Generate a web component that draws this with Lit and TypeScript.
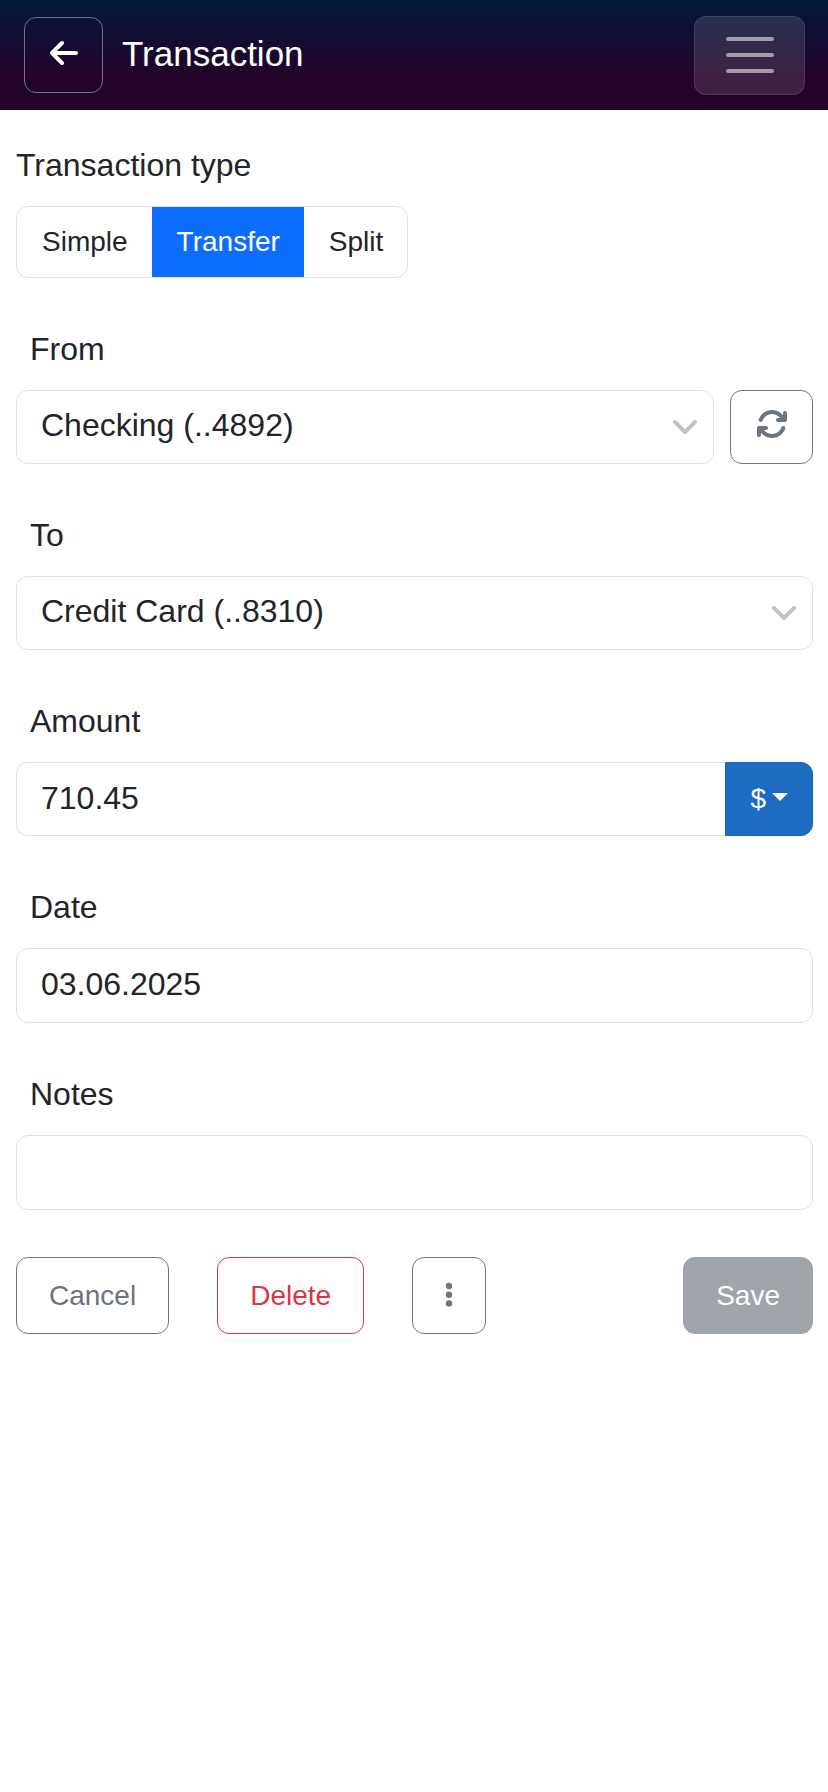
import { LitElement, html, css } from "lit";
import { customElement, state } from "lit/decorators.js";

@customElement("app-root")
export class AppRoot extends LitElement {
  @state() private kind = "Transfer";

  static styles = css`
    :host {
      display: block;
      min-height: 100vh;
      background: #fff;
      color: #212529;
      font: 32px/48px "Liberation Sans", Arial, sans-serif;
    }
    * {
      box-sizing: border-box;
    }
    button,
    input,
    select {
      margin: 0;
      font: inherit;
      color: inherit;
    }
    svg {
      display: block;
    }
    .bar {
      display: flex;
      align-items: center;
      height: 110px;
      padding: 0 23px 0 24px;
      background: linear-gradient(180deg, #02183c 0%, #240328 70%, #240328 100%);
      color: #fff;
    }
    .back {
      display: flex;
      align-items: center;
      justify-content: center;
      width: 79px;
      height: 76px;
      padding: 0 0 4px;
      border: 1px solid #6c757d;
      border-radius: 12px;
      background: none;
    }
    .title {
      margin: 0 auto 0 19px;
      padding-bottom: 2px;
      font-size: 35px;
      font-weight: 400;
    }
    .menu {
      display: flex;
      align-items: center;
      justify-content: center;
      width: 111px;
      height: 79px;
      padding: 0;
      border: 1px solid rgba(255, 255, 255, 0.1);
      border-radius: 12px;
      background: rgba(255, 255, 255, 0.12);
    }
    .page {
      padding: 31px 15px 16px 16px;
    }
    .kinds {
      margin: 0;
      padding: 0;
      border: 0;
    }
    .legend {
      padding: 0;
      margin-bottom: 17px;
    }
    .group {
      display: inline-flex;
      vertical-align: top;
      overflow: hidden;
      border: 1px solid #dee2e6;
      border-radius: 12px;
    }
    .kind {
      display: block;
      padding: 14px 24px 14px 25px;
      font-size: 28px;
      line-height: 42px;
    }
    .kind.on {
      background: #0d6efd;
      color: #fff;
    }
    .radio {
      position: absolute;
      opacity: 0;
      pointer-events: none;
    }
    .field {
      display: flex;
      flex-direction: column;
      gap: 17px;
      margin-top: 47px;
    }
    .label {
      padding-left: 14px;
    }
    .row {
      display: flex;
    }
    .spaced {
      gap: 16px;
    }
    .control {
      display: block;
      flex: 1;
      width: 100%;
      min-width: 0;
      height: 74px;
      padding: 0 24px 2px;
      border: 1px solid #dee2e6;
      border-radius: 12px;
      background: #fff;
      appearance: none;
      outline: 0;
    }
    .plain {
      height: 75px;
    }
    .pick {
      display: grid;
      flex: 1;
      align-items: center;
    }
    .pick > * {
      grid-area: 1 / 1;
    }
    .select {
      padding-bottom: 4px;
    }
    .chevron {
      justify-self: end;
      margin-right: 17px;
      pointer-events: none;
    }
    .joined {
      border-right: 0;
      border-radius: 12px 0 0 12px;
    }
    .currency {
      display: flex;
      align-items: center;
      gap: 6px;
      padding: 0 24px;
      border: 1px solid #1b66b8;
      border-radius: 0 12px 12px 0;
      background: #1c6dc1;
      color: #fff;
      font-size: 28px;
    }
    .caret {
      margin-bottom: 4px;
      border: 8px solid transparent;
      border-top-color: #fff;
      border-bottom: 0;
    }
    .refresh {
      display: flex;
      align-items: center;
      justify-content: center;
      width: 83px;
      padding: 0 0 6px;
      border: 1px solid #6c757d;
      border-radius: 12px;
      background: none;
      color: #6c757d;
    }
    .actions {
      display: flex;
      gap: 48px;
      margin-top: 47px;
    }
    .btn {
      display: flex;
      align-items: center;
      height: 77px;
      padding: 0 32px;
      border: 1px solid currentColor;
      border-radius: 12px;
      background: none;
      color: #6c757d;
      font-size: 28px;
    }
    .more {
      padding-bottom: 2px;
    }
    .danger {
      color: #dc3545;
    }
    .save {
      margin-left: auto;
      border-color: #a0a4ab;
      background: #a0a4ab;
      color: #fff;
    }
  `;

  private picker(id: string, value: string) {
    return html`<div class="pick">
      <select class="control select" id=${id}>
        <option>${value}</option>
      </select>
      <svg class="chevron" width="24" height="24" viewBox="0 0 24 24" fill="none">
        <path d="M2 7 12 17 22 7" stroke="#bfc4cb" stroke-width="4" stroke-linecap="round" stroke-linejoin="round" />
      </svg>
    </div>`;
  }

  render() {
    return html`
      <header class="bar">
        <button class="back" aria-label="Back">
          <svg width="28" height="32" viewBox="0 0 448 512" fill="currentColor">
            <path d="M9.4 233.4c-12.5 12.5-12.5 32.8 0 45.3l160 160c12.5 12.5 32.8 12.5 45.3 0s12.5-32.8 0-45.3L109.2 288 416 288c17.7 0 32-14.3 32-32s-14.3-32-32-32l-306.7 0L214.6 118.6c12.5-12.5 12.5-32.8 0-45.3s-32.8-12.5-45.3 0l-160 160z" />
          </svg>
        </button>
        <h1 class="title">Transaction</h1>
        <button class="menu" aria-label="Menu">
          <svg width="48" height="36" viewBox="0 0 48 36" stroke="#fff" stroke-opacity="0.55" stroke-width="4" stroke-linecap="round">
            <path d="M2 2H46M2 18H46M2 34H46" />
          </svg>
        </button>
      </header>
      <main class="page">
        <fieldset class="kinds">
          <legend class="legend">Transaction type</legend>
          <div class="group">
            ${["Simple", "Transfer", "Split"].map(
              (k) => html`<label class="kind ${k === this.kind ? "on" : ""}"
                ><input class="radio" type="radio" name="kind" .checked=${k === this.kind} @change=${() => (this.kind = k)} />${k}</label
              >`
            )}
          </div>
        </fieldset>
        <div class="field">
          <label class="label" for="from">From</label>
          <div class="row spaced">
            ${this.picker("from", "Checking (..4892)")}
            <button class="refresh" aria-label="Swap accounts">
              <svg width="32" height="32" viewBox="0 0 512 512" fill="currentColor">
                <path d="M105.1 202.6c7.7-21.8 20.2-42.3 37.8-59.8c62.5-62.5 163.8-62.5 226.3 0L386.3 160H352c-17.7 0-32 14.3-32 32s14.3 32 32 32H463.5c0 0 0 0 0 0h.4c17.7 0 32-14.3 32-32V80c0-17.7-14.3-32-32-32s-32 14.3-32 32v35.2L414.4 97.6c-87.5-87.5-229.3-87.5-316.8 0C73.2 122 55.6 150.7 44.8 181.4c-5.9 16.7 2.9 34.9 19.5 40.8s34.9-2.9 40.8-19.5zM39 289.3c-5 1.5-9.8 4.2-13.7 8.2c-4 4-6.7 8.8-8.1 14c-.3 1.2-.6 2.5-.8 3.8c-.3 1.7-.4 3.4-.4 5.1V432c0 17.7 14.3 32 32 32s32-14.3 32-32V396.9l17.6 17.5 0 0c87.5 87.4 229.3 87.4 316.7 0c24.4-24.4 42.1-53.1 52.9-83.7c5.9-16.7-2.9-34.9-19.5-40.8s-34.9 2.9-40.8 19.5c-7.7 21.8-20.2 42.3-37.8 59.8c-62.5 62.5-163.8 62.5-226.3 0l-.1-.1L125.600 352H160c17.7 0 32-14.3 32-32s-14.3-32-32-32H48.4c-1.600 0-3.2 .1-4.8 .3s-3.1 .5-4.600 1z" />
              </svg>
            </button>
          </div>
        </div>
        <div class="field">
          <label class="label" for="to">To</label>
          ${this.picker("to", "Credit Card (..8310)")}
        </div>
        <div class="field">
          <label class="label" for="amount">Amount</label>
          <div class="row">
            <input class="control joined" id="amount" inputmode="decimal" value="710.45" />
            <button class="currency" aria-label="Currency: $">$<span class="caret"></span></button>
          </div>
        </div>
        <div class="field">
          <label class="label" for="date">Date</label>
          <div class="row"><input class="control plain" id="date" value="03.06.2025" /></div>
        </div>
        <div class="field">
          <label class="label" for="notes">Notes</label>
          <div class="row"><input class="control plain" id="notes" /></div>
        </div>
        <div class="actions">
          <button class="btn">Cancel</button>
          <button class="btn danger">Delete</button>
          <button class="btn more" aria-label="More actions">
            <svg width="8" height="26" viewBox="0 0 8 26" fill="currentColor">
              <circle cx="4" cy="4" r="3.2" />
              <circle cx="4" cy="12.7" r="3.2" />
              <circle cx="4" cy="21.4" r="3.2" />
            </svg>
          </button>
          <button class="btn save">Save</button>
        </div>
      </main>
    `;
  }
}
